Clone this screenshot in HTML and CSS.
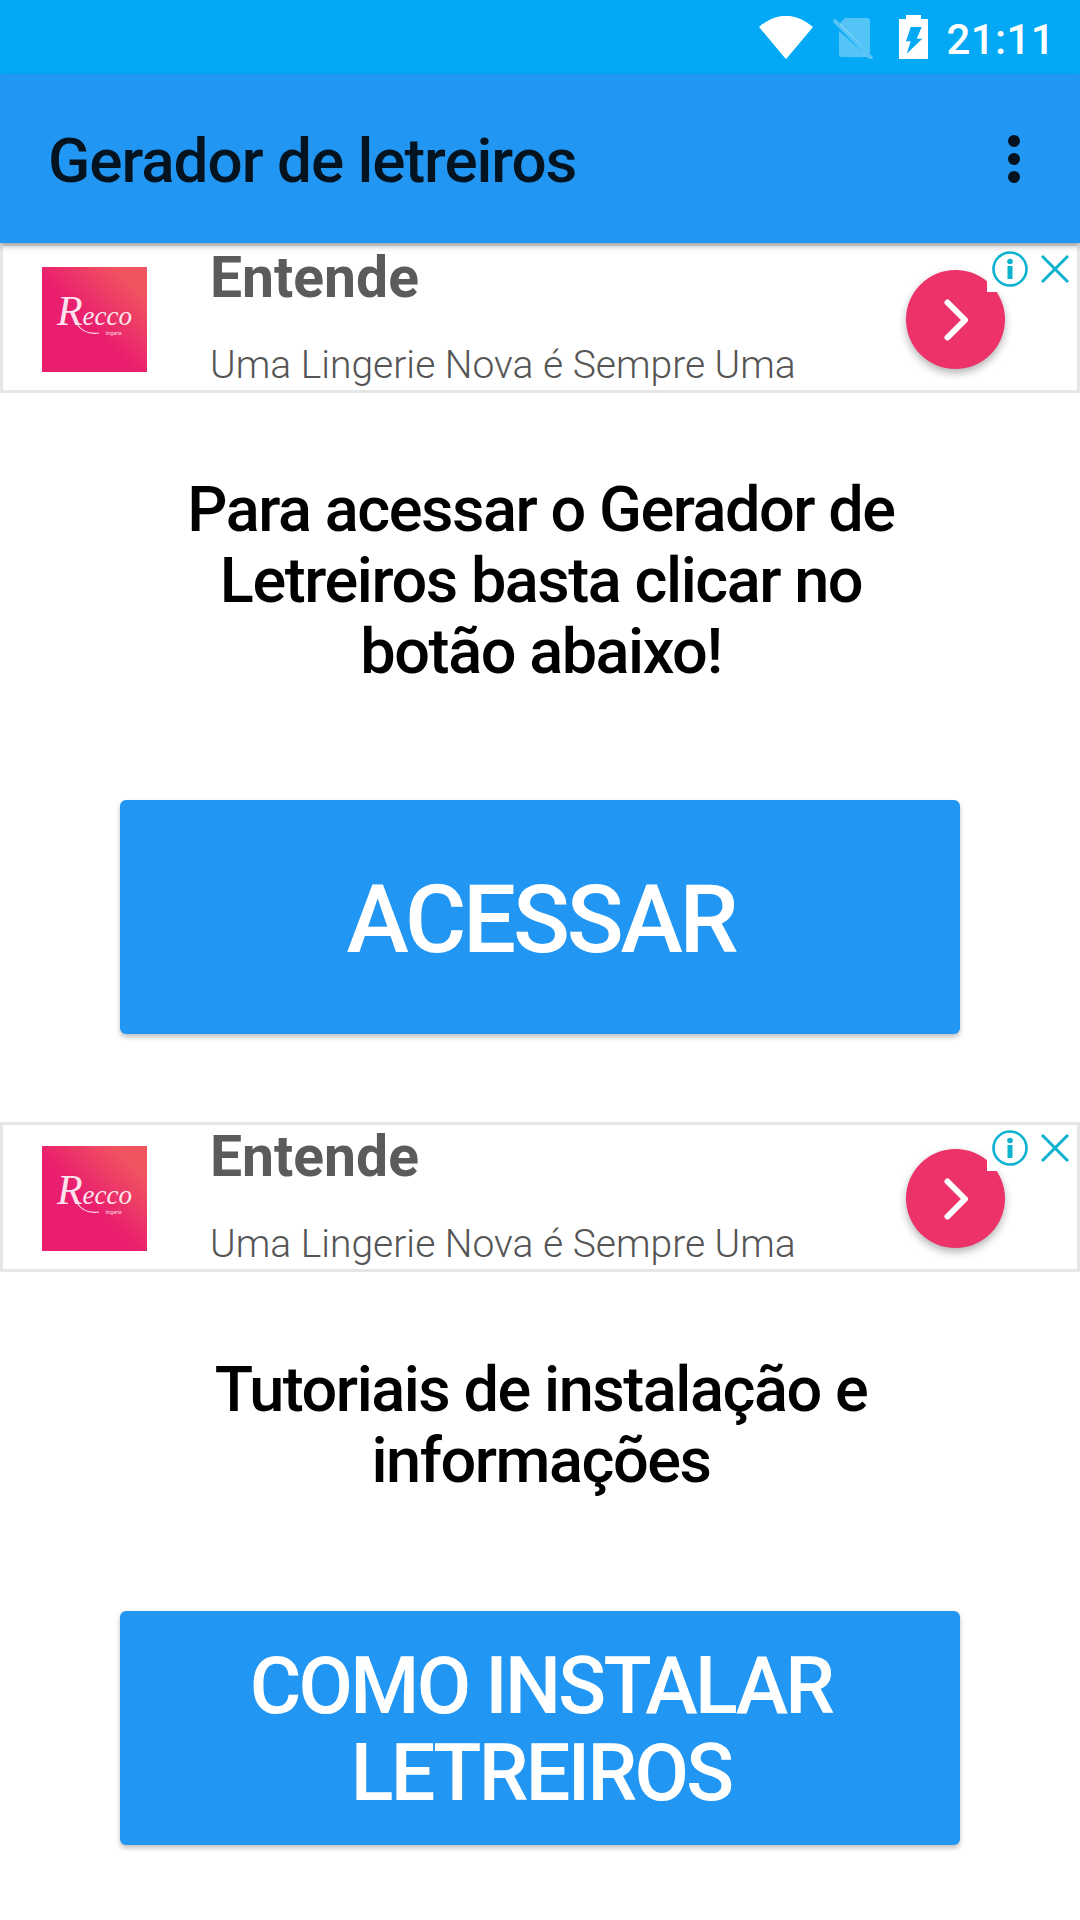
FILE: index.html
```html
<!DOCTYPE html>
<html lang="pt">
<head>
<meta charset="utf-8">
<title>Gerador de letreiros</title>
<link rel="stylesheet" href="styles.css">
</head>
<body>
<div class="status">
  <svg class="ic-wifi" viewBox="0 0 54 43"><path fill="#fff" stroke="#fff" stroke-width="1.5" stroke-linejoin="round" d="M1 11Q27 -10 53 11L27 42z"/></svg>
  <svg class="ic-sim" viewBox="0 0 40 41"><path fill="#fff" fill-opacity=".32" d="M12 0h22a3 3 0 0 1 3 3v33L7 7V5zM6 13l29 26H9a3 3 0 0 1-3-3z"/><path stroke="#fff" stroke-opacity=".32" stroke-width="4" stroke-linecap="round" d="M2 3l36 37"/></svg>
  <svg class="ic-bat" viewBox="0 0 29 44"><path fill="#fff" fill-rule="evenodd" d="M7 0h15v4h7v40H0V4h7zM11.700 12 7 26.300h4.700l-4 12.400L23.300 23.700h-5.600L22.700 12z"/></svg>
  <span class="time">21:11</span>
</div>
<header class="appbar">
  <h1 class="title">Gerador de letreiros</h1>
  <div class="more"><i></i><i></i><i></i></div>
</header>
<main class="content">
  <section class="ad">
    <div class="logo"><span class="logo-name">Recco</span><span class="logo-sub">lingerie</span><svg class="logo-swash" viewBox="0 0 105 105"><path fill="none" stroke="#fff" stroke-opacity=".85" stroke-width="1.200" d="M35 57Q42 68 57 66"/></svg></div>
    <div class="ad-text">
      <div class="ad-title">Entende</div>
      <div class="ad-desc">Uma Lingerie Nova é Sempre Uma</div>
    </div>
    <div class="ad-cta"><svg viewBox="0 0 24 42"><path fill="none" stroke="#fff" stroke-width="6" stroke-linecap="round" stroke-linejoin="round" d="M3.500 3.500L21 21L3.500 38.500"/></svg></div>
    <div class="ad-choices">
      <svg class="ic-info" viewBox="0 0 36 36"><circle cx="18" cy="18" r="16.500" fill="none" stroke="#0db2cf" stroke-width="2.600"/><circle cx="18" cy="10.500" r="2.800" fill="#0db2cf"/><rect x="15.500" y="15" width="5" height="13" fill="#0db2cf"/></svg>
      <svg class="ic-x" viewBox="0 0 28 28"><path fill="none" stroke="#0db2cf" stroke-width="3" d="M1 1l26 26M27 1L1 27"/></svg>
    </div>
  </section>
  <p class="lead lead-one">Para acessar o Gerador de<br>Letreiros basta clicar no<br>botão abaixo!</p>
  <a class="btn btn-big">ACESSAR</a>
  <section class="ad ad-mid">
    <div class="logo"><span class="logo-name">Recco</span><span class="logo-sub">lingerie</span><svg class="logo-swash" viewBox="0 0 105 105"><path fill="none" stroke="#fff" stroke-opacity=".85" stroke-width="1.200" d="M35 57Q42 68 57 66"/></svg></div>
    <div class="ad-text">
      <div class="ad-title">Entende</div>
      <div class="ad-desc">Uma Lingerie Nova é Sempre Uma</div>
    </div>
    <div class="ad-cta"><svg viewBox="0 0 24 42"><path fill="none" stroke="#fff" stroke-width="6" stroke-linecap="round" stroke-linejoin="round" d="M3.500 3.500L21 21L3.500 38.500"/></svg></div>
    <div class="ad-choices">
      <svg class="ic-info" viewBox="0 0 36 36"><circle cx="18" cy="18" r="16.500" fill="none" stroke="#0db2cf" stroke-width="2.600"/><circle cx="18" cy="10.500" r="2.800" fill="#0db2cf"/><rect x="15.500" y="15" width="5" height="13" fill="#0db2cf"/></svg>
      <svg class="ic-x" viewBox="0 0 28 28"><path fill="none" stroke="#0db2cf" stroke-width="3" d="M1 1l26 26M27 1L1 27"/></svg>
    </div>
  </section>
  <p class="lead lead-two">Tutoriais de instalação e<br>informações</p>
  <a class="btn btn-two">COMO INSTALAR<br>LETREIROS</a>
</main>
</body>
</html>
```
FILE: styles.css
```css
* { box-sizing: border-box; }
html, body { margin: 0; height: 100%; }
body { width: 1080px; height: 1920px; overflow: hidden; background: #fff; font-family: Roboto, sans-serif; color: #000; }
.status { height: 74px; background: #03a9f4; display: flex; align-items: flex-start; justify-content: flex-end; padding: 16px 25px 0 0; }
.status svg { display: block; flex: none; }
.ic-wifi { width: 54px; height: 43px; margin-right: 20px; }
.ic-sim { width: 40px; height: 41px; margin-right: 26px; margin-top: 2px; }
.ic-bat { width: 29px; height: 44px; margin-right: 18px; margin-top: -1px; }
.time { color: #fff; font-size: 42px; font-weight: 500; letter-spacing: 0.4px; line-height: 48px; }
.appbar { height: 169px; background: #2196f3; display: flex; align-items: center; justify-content: space-between; padding: 0 60px 0 48px; position: relative; z-index: 2; box-shadow: 0 3px 6px rgba(0,0,0,.3); }
.title { margin: 4px 0 0; font-size: 62px; letter-spacing: -1.02px; font-weight: 500; line-height: 70px; color: rgba(0,0,0,.87); }
.more { display: flex; flex-direction: column; gap: 6px; }
.more i { display: block; width: 12px; height: 12px; border-radius: 50%; background: #04121f; }
.content { display: flex; flex-direction: column; align-items: center; }
.ad { position: relative; width: 1080px; height: 150px; display: flex; border: 3px solid #e6e6e6; background: #fff; padding: 21px 0 0 39px; }
.ad-mid { margin-top: 88px; }
.logo { position: relative; width: 105px; height: 105px; padding-bottom: 6px; background: linear-gradient(45deg, #e91e6f 45%, #f0545f 85%); display: flex; flex-direction: column; align-items: center; justify-content: center; color: #fff; flex: none; }
.logo-name { display: block; font-family: "Liberation Serif", serif; font-style: italic; font-size: 27px; line-height: 28px; color: rgba(255,255,255,.9); }
.logo-name::first-letter { font-size: 42px; }
.logo-sub { font-size: 5px; line-height: 6px; margin-left: 38px; color: rgba(255,255,255,.8); }
.logo-swash { position: absolute; left: 0; top: 0; width: 105px; height: 105px; display: block; }
.ad-text { margin-left: 63px; display: flex; flex-direction: column; }
.ad-title { font-size: 57px; font-weight: 700; color: #5b5b5b; line-height: 64px; margin-top: -21px; }
.ad-desc { font-size: 39px; font-weight: 300; color: #555; line-height: 46px; margin-top: 32px; }
.ad-cta { position: absolute; left: 903px; top: 24px; width: 99px; height: 99px; border-radius: 50%; background: #ec3268; box-shadow: 0 4px 8px rgba(0,0,0,.3); display: flex; align-items: center; justify-content: center; }
.ad-cta svg { width: 24px; height: 42px; display: block; }
.ad-choices { position: absolute; right: 8px; top: 5px; display: flex; align-items: center; gap: 13px; background: #fff; padding: 0 0 5px 5px; }
.ic-info { width: 36px; height: 36px; display: block; }
.ic-x { width: 28px; height: 28px; display: block; }
.lead { margin: 0; text-align: center; font-size: 63px; letter-spacing: -1.45px; font-weight: 500; line-height: 71px; width: 1080px; padding-left: 2px; }
.lead-one { margin-top: 81px; }
.lead-two { margin-top: 82px; }
.btn { width: 840px; height: 234px; background: #2196f3; color: #fff; border-radius: 6px; box-shadow: 0 3px 5px rgba(0,0,0,.25); display: flex; align-items: center; justify-content: center; text-align: center; font-weight: 500; }
.btn-big { margin-top: 113px; font-size: 94px; letter-spacing: -3.2px; line-height: 100px; padding: 5px 0 0 2px; }
.btn-two { margin-top: 115px; font-size: 79px; letter-spacing: -2.7px; line-height: 87px; padding: 4px 0 0 2px; }
```
